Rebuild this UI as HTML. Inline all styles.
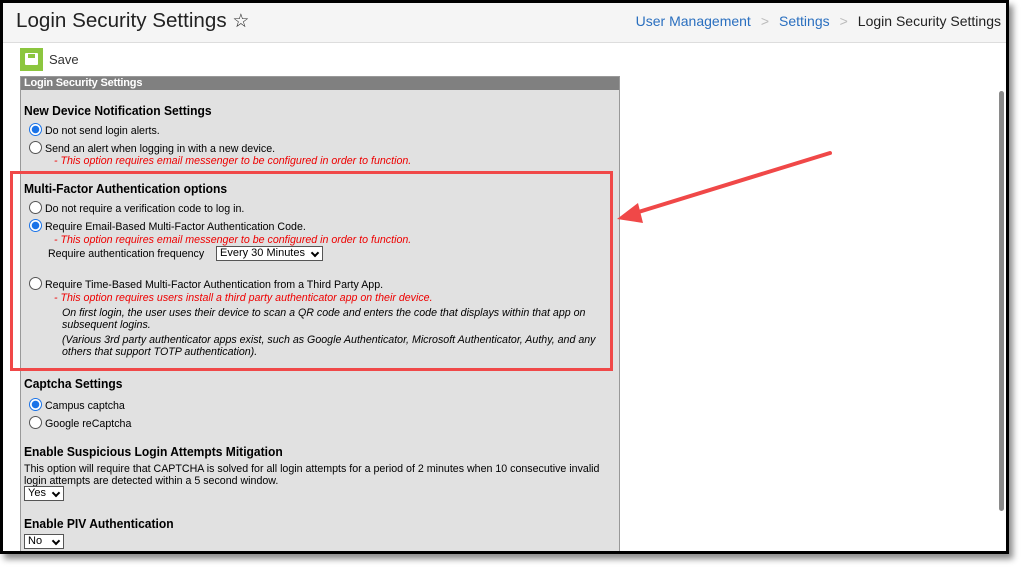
<!DOCTYPE html>
<html><head><style>
*{margin:0;padding:0;box-sizing:border-box}
body{width:1024px;height:571px;background:#fff;position:relative;overflow:hidden;font-family:"Liberation Sans",Arial,sans-serif}
.frame{position:absolute;left:0;top:0;width:1009px;height:554px;border:3px solid #000;background:#fff;box-shadow:4px 5px 6px rgba(0,0,0,.45);overflow:hidden}
.hdr{position:absolute;left:0;top:0;width:1003px;height:40px;background:#f5f5f5;border-bottom:1px solid #ddd}
.title{position:absolute;left:13px;top:6px;font-size:20.6px;color:#222}
.bc{position:absolute;right:5px;top:10px;font-size:14px;color:#222}
.bc a{color:#2a6fbf}
.bc .s{color:#bbb;margin:0 10px}
.save{position:absolute;left:17px;top:45px;width:23px;height:23px;background:#8cc63f}
.savet{position:absolute;left:46px;top:49px;font-size:13px;color:#333}
.panel{position:absolute;left:17px;top:73px;width:600px;height:490px;background:#e1e1e1;border:1px solid #999}
.ph{height:13px;background:#808080;color:#fff;font-weight:bold;font-size:11px;padding-left:3px;line-height:13px;letter-spacing:-.2px}
.t{position:absolute;font-size:10.65px;color:#000;white-space:nowrap}
.h{position:absolute;font-size:12.7px;font-weight:bold;color:#000;transform:scaleX(.95);transform-origin:0 0;white-space:nowrap}
.r{color:#e00;font-style:italic}
.i{font-style:italic}
.rad{position:absolute;width:13px;height:13px;border-radius:50%;border:1px solid #555;background:#fff}
.rad.on{border:1px solid #1a73e8;background:radial-gradient(circle,#1a73e8 0 3.5px,#fff 4px)}
.sel{position:absolute;height:15px;border:1px solid #555;background:#fff;font-size:11px;padding-left:3px;line-height:13px}
.sel:after{content:"";position:absolute;right:4px;top:3px;width:4px;height:4px;border-right:2px solid #000;border-bottom:2px solid #000;transform:rotate(45deg)}
.sb{position:absolute;left:996px;top:88px;width:5px;height:420px;background:#8a8a8a;border-radius:3px}
</style></head><body>
<div class="frame">
<div class="hdr"><div class="title">Login Security Settings <span style="font-size:19px">☆</span></div>
<div class="bc"><a>User Management</a><span class="s">&gt;</span><a>Settings</a><span class="s">&gt;</span>Login Security Settings</div></div>
<div class="save"><div style="position:absolute;left:5px;top:5px;width:13px;height:12px;background:#fff;border-radius:1px"></div><div style="position:absolute;left:8px;top:6px;width:7px;height:4px;background:#8cc63f"></div></div>
<div class="savet">Save</div>
<div class="panel"><div class="ph">Login Security Settings</div></div>
<div class="sb"></div>
</div>
<div class="h" style="left:24px;top:104px">New Device Notification Settings</div>
<div class="rad on" style="left:29px;top:123px"></div><div class="t" style="left:45px;top:125px">Do not send login alerts.</div>
<div class="rad" style="left:29px;top:141px"></div><div class="t" style="left:45px;top:143px">Send an alert when logging in with a new device.</div>
<div class="t r" style="left:54px;top:155px">- This option requires email messenger to be configured in order to function.</div>
<div class="h" style="left:24px;top:182px">Multi-Factor Authentication options</div>
<div class="rad" style="left:29px;top:201px"></div><div class="t" style="left:45px;top:203px">Do not require a verification code to log in.</div>
<div class="rad on" style="left:29px;top:219px"></div><div class="t" style="left:45px;top:221px">Require Email-Based Multi-Factor Authentication Code.</div>
<div class="t r" style="left:54px;top:234px">- This option requires email messenger to be configured in order to function.</div>
<div class="t" style="left:48px;top:248px">Require authentication frequency</div>
<div class="sel" style="left:216px;top:246px;width:107px">Every 30 Minutes</div>
<div class="rad" style="left:29px;top:277px"></div><div class="t" style="left:45px;top:279px">Require Time-Based Multi-Factor Authentication from a Third Party App.</div>
<div class="t r" style="left:54px;top:292px">- This option requires users install a third party authenticator app on their device.</div>
<div class="t i" style="left:62px;top:307px">On first login, the user uses their device to scan a QR code and enters the code that displays within that app on</div>
<div class="t i" style="left:62px;top:319px">subsequent logins.</div>
<div class="t i" style="left:62px;top:334px">(Various 3rd party authenticator apps exist, such as Google Authenticator, Microsoft Authenticator, Authy, and any</div>
<div class="t i" style="left:62px;top:346px">others that support TOTP authentication).</div>
<div style="position:absolute;left:10px;top:171px;width:603px;height:200px;border:3px solid #f04848"></div>
<svg style="position:absolute;left:0;top:0" width="1024" height="571"><line x1="830" y1="153" x2="632" y2="214" stroke="#f04848" stroke-width="4" stroke-linecap="round"/><polygon points="617,219 638,203 643,223" fill="#f04848"/></svg>
<div class="h" style="left:24px;top:377px">Captcha Settings</div>
<div class="rad on" style="left:29px;top:398px"></div><div class="t" style="left:45px;top:400px">Campus captcha</div>
<div class="rad" style="left:29px;top:416px"></div><div class="t" style="left:45px;top:418px">Google reCaptcha</div>
<div class="h" style="left:24px;top:445px">Enable Suspicious Login Attempts Mitigation</div>
<div class="t" style="left:24px;top:463px">This option will require that CAPTCHA is solved for all login attempts for a period of 2 minutes when 10 consecutive invalid</div>
<div class="t" style="left:24px;top:475px">login attempts are detected within a 5 second window.</div>
<div class="sel" style="left:24px;top:486px;width:40px">Yes</div>
<div class="h" style="left:24px;top:517px">Enable PIV Authentication</div>
<div class="sel" style="left:24px;top:534px;width:40px">No</div>
</body></html>
